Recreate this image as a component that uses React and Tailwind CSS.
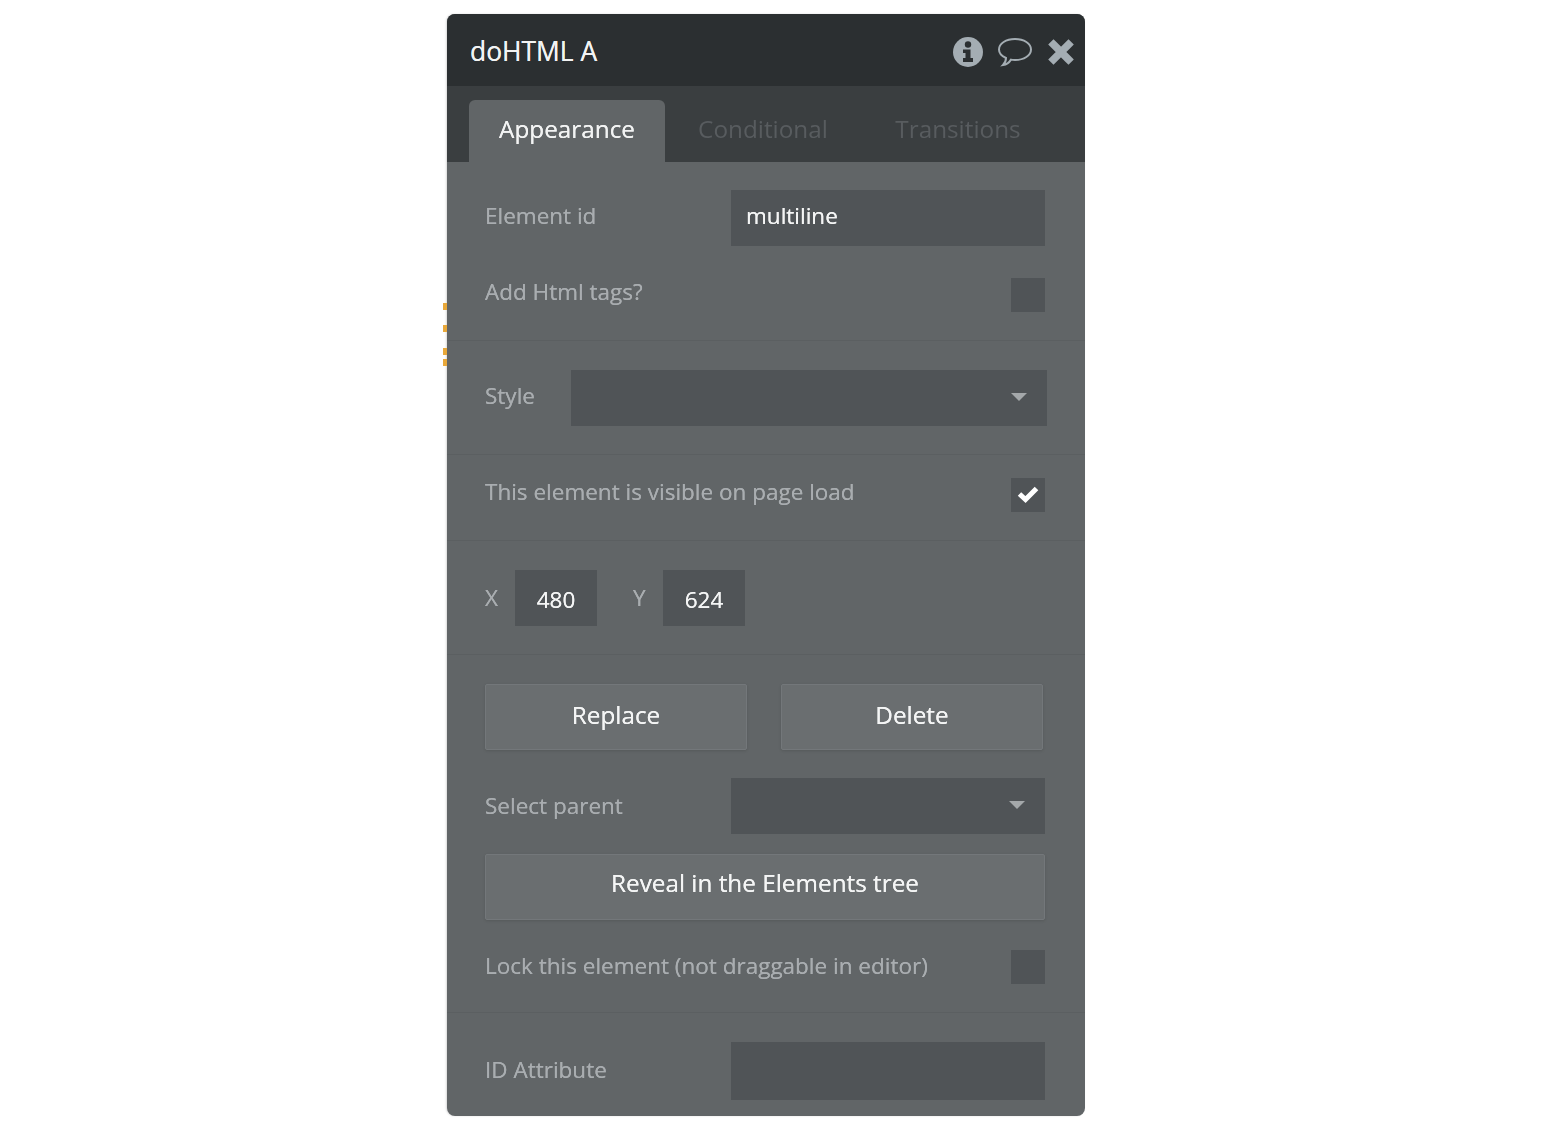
const font = { fontFamily: '"Open Sans", sans-serif' };

function Label({ children, className = "" }) {
  return <span className={`text-[22.5px] leading-[30px] text-[#a9adb0] [text-shadow:0_0_0.5px_#a9adb0] ${className}`}>{children}</span>;
}

function Field({ className = "", children }) {
  return <div className={`bg-[#505457] flex items-center ${className}`}>{children}</div>;
}

function Check({ checked }) {
  return (
    <div className="w-[34px] h-[34px] bg-[#505457] flex items-center justify-center">
      {checked && (
        <svg width="22" height="18" viewBox="0 0 22 18">
          <path d="M2.5 8 L8.5 13.5 L19.5 2.5" fill="none" stroke="#ffffff" strokeWidth="5" />
        </svg>
      )}
    </div>
  );
}

function Caret() {
  return (
    <svg width="16" height="8" viewBox="0 0 16 8" className="mb-[3px]">
      <path d="M0 0 H16 L8 8 Z" fill="#a4a8aa" />
    </svg>
  );
}

function Btn({ children, className = "" }) {
  return (
    <div className={`h-[66px] bg-[#6a6e70] border border-[#73777a] rounded-[2px] shadow-[0_1px_3px_rgba(0,0,0,0.12)] flex items-center justify-center text-[24.3px] text-[#f4f5f5] [text-shadow:0_0_0.5px_#f4f5f5] ${className}`}>
      {children}
    </div>
  );
}

const Section = ({ className = "", children }) => (
  <div className={`border-b border-[#5b5f61] px-[38px] ${className}`}>{children}</div>
);

export default function App() {
  return (
    <div className="w-[1542px] h-[1134px] bg-white overflow-hidden pt-[14px] pl-[447px]" style={font}>
      <div className="relative w-[638px] h-[1102px] rounded-[8px] bg-[#616567] shadow-[-1px_0_2px_rgba(0,0,0,0.15)] [filter:blur(0.7px)]">
        <div className="absolute -left-[4px] top-[289px] w-[4px] h-[7px] bg-[#e8a83a]" />
        <div className="absolute -left-[4px] top-[311px] w-[4px] h-[7px] bg-[#e8a83a]" />
        <div className="absolute -left-[4px] top-[334px] w-[4px] h-[7px] bg-[#e8a83a]" />
        <div className="absolute -left-[4px] top-[345px] w-[4px] h-[7px] bg-[#e8a83a]" />

        <div className="h-[72px] bg-[#2b2f31] rounded-t-[8px] flex items-center justify-between pl-[23px] pr-[11px]">
          <span className="text-[26.4px] text-[#f2f3f3] leading-[36px] pt-[2px] [text-shadow:0_0_0.5px_#f2f3f3]">doHTML A</span>
          <div className="flex items-center gap-[14px] pt-[4px]">
            <svg width="32" height="32" viewBox="0 0 32 32" className="-mr-[1px]">
              <circle cx="16" cy="16" r="15" fill="#a4adb3" />
              <circle cx="16" cy="8.5" r="3.2" fill="#2b2f31" />
              <path d="M11 13.5 H18.5 V22 H21 V26 H11 V22 H13.5 V17 H11 Z" fill="#2b2f31" />
            </svg>
            <svg width="36" height="32" viewBox="0 0 36 32" className="mr-[1px]">
              <path d="M18 3 C27 3 34 7.5 34 13.5 C34 19.5 27 24 18 24 C16.5 24 15.5 24 14 23.6 C12.5 26 9.5 28.5 6 29 C8 27 9 24.5 9 22 C4.5 20 2 17 2 13.5 C2 7.5 9 3 18 3 Z" fill="none" stroke="#a4adb3" strokeWidth="2" />
            </svg>
            <svg width="26" height="26" viewBox="0 0 26 26">
              <path d="M5.5 5.5 L20.5 20.5 M20.5 5.5 L5.5 20.5" stroke="#a4adb3" strokeWidth="7.5" strokeLinecap="square" />
            </svg>
          </div>
        </div>

        <div className="h-[76px] bg-[#3a3e40] flex items-end pl-[22px] text-[24.3px]">
          <div className="w-[196px] h-[62px] bg-[#616567] rounded-t-[6px] flex items-center justify-center text-[#f2f3f3] pb-[4px] [text-shadow:0_0_0.5px_#f2f3f3]">Appearance</div>
          <div className="w-[196px] h-[62px] flex items-center justify-center text-[#585c5f] pb-[4px]">Conditional</div>
          <div className="w-[196px] h-[62px] flex items-center justify-center text-[#585c5f] pb-[4px] -translate-x-[1px]">Transitions</div>
        </div>

        <Section className="h-[179px] pt-[28px]">
          <div className="flex items-center justify-between pr-[2px]">
            <Label className="pb-[4px]">Element id</Label>
            <Field className="w-[314px] h-[56px] pl-[15px] pb-[4px] text-[22.5px] text-[#f4f5f5] [text-shadow:0_0_0.5px_#f4f5f5]">multiline</Field>
          </div>
          <div className="flex items-center justify-between pr-[2px] mt-[31px]">
            <Label className="pb-[5px]">Add Html tags?</Label>
            <Check />
          </div>
        </Section>

        <Section className="h-[114px] pt-[29px]">
          <div className="flex items-center justify-between">
            <Label className="pb-[4px]">Style</Label>
            <Field className="w-[476px] h-[56px] justify-end pr-[20px]"><Caret /></Field>
          </div>
        </Section>

        <Section className="h-[86px] pt-[22px]">
          <div className="flex items-center justify-between pr-[2px]">
            <Label className="pb-[5px]">This element is visible on page load</Label>
            <Check checked />
          </div>
        </Section>

        <Section className="h-[114px] pt-[29px]">
          <div className="flex items-center">
            <Label className="w-[30px]">X</Label>
            <Field className="w-[82px] h-[56px] justify-center pt-[4px] text-[22.5px] text-[#f4f5f5] [text-shadow:0_0_0.5px_#f4f5f5]">480</Field>
            <Label className="ml-[36px] w-[30px]">Y</Label>
            <Field className="w-[82px] h-[56px] justify-center pt-[4px] text-[22.5px] text-[#f4f5f5] [text-shadow:0_0_0.5px_#f4f5f5]">624</Field>
          </div>
        </Section>

        <div className="px-[38px] pt-[29px] border-b border-[#5b5f61] h-[358px]">
          <div className="flex gap-[34px]">
            <Btn className="w-[262px] pb-[3px]">Replace</Btn>
            <Btn className="w-[262px] pb-[3px]">Delete</Btn>
          </div>
          <div className="flex items-center justify-between mt-[28px] pr-[2px]">
            <Label>Select parent</Label>
            <Field className="w-[314px] h-[56px] justify-end pr-[20px]"><Caret /></Field>
          </div>
          <Btn className="w-[560px] mt-[20px] pb-[7px]">Reveal in the Elements tree</Btn>
          <div className="flex items-center justify-between mt-[30px] pr-[2px]">
            <Label className="pb-[2px]">Lock this element (not draggable in editor)</Label>
            <Check />
          </div>
        </div>

        <div className="px-[38px] pr-[40px] pt-[29px] flex items-center justify-between">
          <Label className="pb-[2px]">ID Attribute</Label>
          <Field className="w-[314px] h-[58px]" />
        </div>
      </div>
    </div>
  );
}
